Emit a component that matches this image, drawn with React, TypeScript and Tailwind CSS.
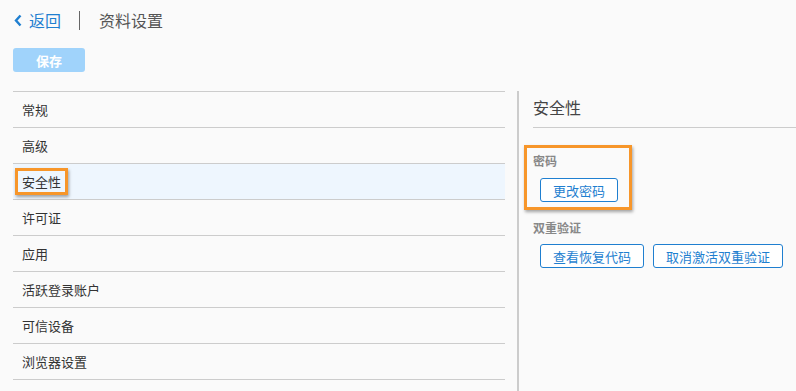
const font = { fontFamily: '"Noto Sans CJK SC", "Liberation Sans", sans-serif' }

const menuItems = ['常规', '高级', '安全性', '许可证', '应用', '活跃登录账户', '可信设备', '浏览器设置']

function OutlineButton({ label }: { label: string }) {
  return (
    <button className="h-[24px] px-[12px] bg-white border border-[#1f7fd0] rounded-[3px] text-[13px] leading-none text-[#1f7fd0]">
      {label}
    </button>
  )
}

export default function App() {
  const selected = '安全性'

  return (
    <div className="w-[796px] h-[391px] bg-[#fafafa] overflow-hidden text-[#333]" style={font}>
      {/* Header */}
      <div className="flex items-center h-[40px] pl-[14px]">
        <svg width="9" height="13" viewBox="0 0 9 13" className="mr-[6px]">
          <path d="M6.5 1.5 L2 6.5 L6.5 11.5" fill="none" stroke="#1f7fd0" strokeWidth="2.4" />
        </svg>
        <span className="text-[16px] text-[#1f7fd0]">返回</span>
        <div className="w-px h-[19px] bg-[#666] ml-[18px] mr-[19px]" />
        <span className="text-[16px] text-[#555]">资料设置</span>
      </div>

      {/* Save */}
      <div className="flex pl-[13px] pt-[8px]">
        <button className="w-[72px] h-[24px] rounded-[3px] bg-[#a0d3fb] text-white text-[13px] font-bold leading-none">
          保存
        </button>
      </div>

      {/* Body */}
      <div className="flex mt-[19px]">
        <div className="w-[492px] ml-[13px] border-t border-[#cccccc]">
          {menuItems.map((item) => (
            <div
              key={item}
              className={`h-[36px] flex items-center pl-[9px] border-b border-[#cccccc] text-[13px] ${
                item === selected ? 'bg-[#eef6fe]' : ''
              }`}
            >
              {item === selected ? (
                <span className="inline-block -ml-[7px] px-[4px] py-[2px] border-[3px] border-[#f7962a] shadow-[1px_2px_3px_rgba(0,0,0,0.35)] leading-[17px]">
                  {item}
                </span>
              ) : (
                item
              )}
            </div>
          ))}
        </div>

        <div className="w-[2px] bg-[#cccccc] ml-[12px] h-[300px]" />

        <div className="flex-1 pl-[14px]">
          <div className="h-[37px] pt-[6px] border-b border-[#cccccc] text-[16px] leading-[20px] text-[#444]">
            安全性
          </div>

          <div className="inline-flex flex-col -ml-[9px] mt-[17px] border-[3px] border-[#f7962a] pl-[6px] pr-[11px] pt-[4px] pb-[5px] shadow-[1px_2px_3px_rgba(0,0,0,0.35)]">
            <div className="text-[12px] font-bold text-[#888] leading-[18px]">密码</div>
            <div className="flex pl-[7px] mt-[8px]">
              <OutlineButton label="更改密码" />
            </div>
          </div>

          <div className="mt-[9px] text-[12px] font-bold text-[#888] leading-[18px]">双重验证</div>
          <div className="flex gap-[9px] pl-[7px] mt-[7px]">
            <OutlineButton label="查看恢复代码" />
            <OutlineButton label="取消激活双重验证" />
          </div>
        </div>
      </div>
    </div>
  )
}
